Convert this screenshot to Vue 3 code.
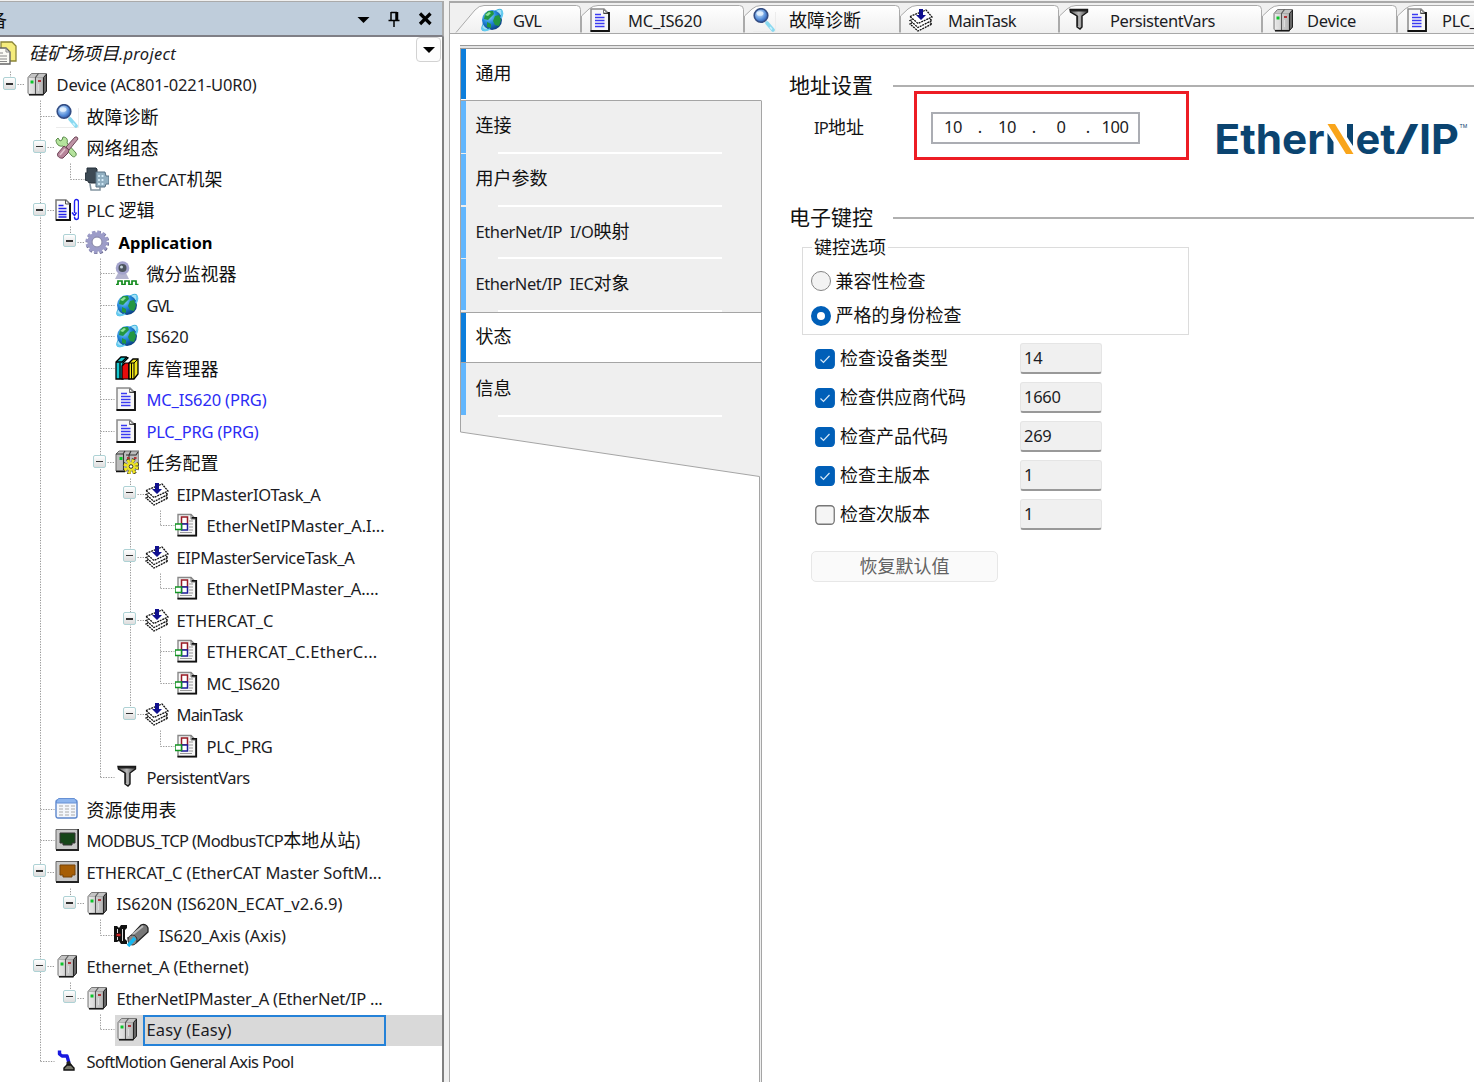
<script setup>
const rows = [
  { d: -1, icon: 'project', t: '硅矿场项目.project', w: 147, cls: 'proj' },
  { d: 0, icon: 'device', t: 'Device (AC801-0221-U0R0)', w: 200, open: true },
  { d: 1, icon: 'magnify', t: '故障诊断' },
  { d: 1, icon: 'network', t: '网络组态', open: true },
  { d: 2, icon: 'rack', t: 'EtherCAT机架', w: 106 },
  { d: 1, icon: 'plc', t: 'PLC 逻辑', w: 68, open: true },
  { d: 2, icon: 'gear', t: 'Application', w: 94, open: true, cls: 'bold' },
  { d: 3, icon: 'monitor', t: '微分监视器' },
  { d: 3, icon: 'globe', t: 'GVL', w: 26 },
  { d: 3, icon: 'globe', t: 'IS620', w: 42 },
  { d: 3, icon: 'books', t: '库管理器' },
  { d: 3, icon: 'doc', t: 'MC_IS620 (PRG)', w: 120, cls: 'blue' },
  { d: 3, icon: 'doc', t: 'PLC_PRG (PRG)', w: 112, cls: 'blue' },
  { d: 3, icon: 'taskcfg', t: '任务配置', open: true },
  { d: 4, icon: 'task', t: 'EIPMasterIOTask_A', w: 144, open: true },
  { d: 5, icon: 'call', t: 'EtherNetIPMaster_A.I...', w: 178 },
  { d: 4, icon: 'task', t: 'EIPMasterServiceTask_A', w: 178, open: true },
  { d: 5, icon: 'call', t: 'EtherNetIPMaster_A....', w: 172 },
  { d: 4, icon: 'task', t: 'ETHERCAT_C', w: 97, open: true },
  { d: 5, icon: 'call', t: 'ETHERCAT_C.EtherC...', w: 171 },
  { d: 5, icon: 'call', t: 'MC_IS620', w: 73 },
  { d: 4, icon: 'task', t: 'MainTask', w: 66, open: true },
  { d: 5, icon: 'call', t: 'PLC_PRG', w: 66 },
  { d: 3, icon: 'funnel', t: 'PersistentVars', w: 103 },
  { d: 1, icon: 'table', t: '资源使用表' },
  { d: 1, icon: 'modbus', t: 'MODBUS_TCP (ModbusTCP本地从站)', w: 273 },
  { d: 1, icon: 'ecat', t: 'ETHERCAT_C (EtherCAT Master SoftM...', w: 295, open: true },
  { d: 2, icon: 'device', t: 'IS620N (IS620N_ECAT_v2.6.9)', w: 226, open: true },
  { d: 3, icon: 'axis', t: 'IS620_Axis (Axis)', w: 127, cls: 'wide' },
  { d: 1, icon: 'device', t: 'Ethernet_A (Ethernet)', w: 162, open: true },
  { d: 2, icon: 'device', t: 'EtherNetIPMaster_A (EtherNet/IP ...', w: 266, open: true },
  { d: 3, icon: 'device', t: 'Easy (Easy)', w: 85, cls: 'sel' },
  { d: 1, icon: 'pool', t: 'SoftMotion General Axis Pool', w: 207 },
]

const PITCH = 31.5
const mid = (i) => Math.round(i * PITCH + 14.5) + 0.5

// dotted guides joining each node to its parent
const guides = []
rows.forEach((r, i) => {
  if (r.d < 0) return
  const x = 10.5 + 30 * r.d
  guides.push({ x1: r.open ? x + 7 : x, y1: mid(i), x2: x + 14, y2: mid(i) })
  let last = -1
  for (let j = i + 1; j < rows.length && rows[j].d > r.d; j++) {
    if (rows[j].d === r.d + 1) last = j
  }
  if (last > 0) guides.push({ x1: x + 30, y1: mid(i) + 16, x2: x + 30, y2: mid(last) })
})
guides.push({ x1: 10.5, y1: 33.5, x2: 10.5, y2: 40 })

const tabs = [
  { icon: 'globe', t: 'GVL', w: 131, lw: 28, ix: 30, lx: 63, first: true },
  { icon: 'doc', t: 'MC_IS620', w: 163, lw: 74, ix: 8, lx: 47 },
  { icon: 'magnify', t: '故障诊断', w: 156, ix: 8, lx: 45 },
  { icon: 'task', t: 'MainTask', w: 159, lw: 68, ix: 9, lx: 48 },
  { icon: 'funnel', t: 'PersistentVars', w: 203, lw: 105, ix: 8, lx: 51 },
  { icon: 'device', t: 'Device', w: 135, lw: 49, ix: 9, lx: 45 },
  { icon: 'doc', t: 'PLC_PRG', w: 160, lw: 66, ix: 9, lx: 45 },
]
const tabPath = (t) => {
  const end = `L${t.w - 4.5} .5 Q${t.w - 0.5} .5 ${t.w - 0.5} 4.5 L${t.w - 0.5} 27.5`
  return t.first ? `M6 27.5 L25 5 Q29 .5 34 .5 ${end}` : `M.5 27.5 L.5 11 L8 4 Q12 .5 17 .5 ${end}`
}

const nav = [
  { t: '通用', on: true },
  { t: '连接' },
  { t: '用户参数' },
  { t: 'EtherNet/IP  I/O映射', w: 154 },
  { t: 'EtherNet/IP  IEC对象', w: 154 },
  { t: '状态', on: true },
  { t: '信息' },
]

const checks = [
  { t: '检查设备类型', v: '14', on: true },
  { t: '检查供应商代码', v: '1660', on: true },
  { t: '检查产品代码', v: '269', on: true },
  { t: '检查主版本', v: '1', on: true },
  { t: '检查次版本', v: '1', on: false },
]

const parts = (s) => s.match(/[\u4e00-\u9fff]+|[^\u4e00-\u9fff]+/g).map((t) => ({ t, cjk: /[\u4e00-\u9fff]/.test(t) }))

// spreads the Latin letters so that a label takes the given width
const vFit = {
  mounted(el, { value }) {
    if (!value) return
    const latin = [...el.children].filter((c) => !c.classList.contains('cj'))
    const n = latin.reduce((a, c) => a + c.textContent.length, 0)
    const gap = (value - el.getBoundingClientRect().width) / n
    latin.forEach((c) => { c.style.letterSpacing = gap + 'px' })
  },
}
</script>

<template>
  <div class="app">
    <svg class="defs" width="0" height="0">
      <defs>
        <linearGradient id="gm" x1="0" x2="1"><stop offset="0" stop-color="#eee" /><stop offset="1" stop-color="#b4b4b4" /></linearGradient>
        <radialGradient id="gb" cx=".35" cy=".3" r=".8"><stop offset="0" stop-color="#8fd8ff" /><stop offset=".45" stop-color="#2287dc" /><stop offset="1" stop-color="#06306f" /></radialGradient>
        <radialGradient id="gl" cx=".4" cy=".35" r=".7"><stop offset="0" stop-color="#d8ecff" /><stop offset=".6" stop-color="#5b93dc" /><stop offset="1" stop-color="#2450a8" /></radialGradient>
        <linearGradient id="gf" x1="0" x2="1"><stop offset="0" stop-color="#555" /><stop offset=".5" stop-color="#bbb" /><stop offset="1" stop-color="#444" /></linearGradient>
        <linearGradient id="tabg" x1="0" y1="0" x2="0" y2="1"><stop offset="0" stop-color="#fff" /><stop offset="1" stop-color="#f0f0f0" /></linearGradient>
      </defs>
      <symbol id="project" viewBox="0 0 24 24">
        <path d="M8 1h11l4 4v15H8z" fill="#f5ec7c" stroke="#8a8436" stroke-width="1.3" />
        <path d="M1 7h12l4 4v12H1z" fill="#fbfbf5" stroke="#666" stroke-width="1.4" />
        <path d="M13 7v4h4M4 12h6M4 15h10M4 18h10M4 20.500h10" fill="none" stroke="#888" />
      </symbol>
      <symbol id="device" viewBox="0 0 24 24">
        <path d="M3 5.500L6.500 1.500H21.500V19L18.500 22.500H4L3 21z" fill="#c4c4c4" stroke="#777" />
        <path d="M3.500 5.500H18V22H3.500z" fill="url(#gm)" stroke="#999" stroke-width=".6" />
        <path d="M13.500 1.500L10.500 5.500V22.500" fill="none" stroke="#555" stroke-width="1.1" />
        <path d="M18.500 5.500L21.500 2V19L18.500 22.500z" fill="#666" stroke="#222" />
        <path d="M4 22.800H18.500" stroke="#111" stroke-width="1.500" />
        <path d="M6 12v7M13.500 12v7" stroke="#ddd" /><path d="M5.500 8.500h3v3h-3z" fill="#0cc52a" /><path d="M13 8h3v2h-3z" fill="#b0343a" />
      </symbol>
      <symbol id="magnify" viewBox="0 0 24 24">
        <path d="M1 23.500H23.500V4" fill="none" stroke="#ececec" />
        <path d="M15 15L21 22" stroke="#8ad9f0" stroke-width="3.600" stroke-linecap="round" /><path d="M18 19l2 2.400" stroke="#c8f3ff" stroke-width="1.500" />
        <circle cx="9" cy="7.500" r="6.800" fill="url(#gl)" stroke="#334d83" stroke-width="1.600" /><ellipse cx="8" cy="5.500" rx="3.500" ry="2.300" fill="#eaf5ff" opacity=".8" />
      </symbol>
      <symbol id="network" viewBox="0 0 24 24">
        <path d="M3 3l2 3 2-1 1-3c4 0 5 3 4 6l9 10c1 3-2 5-4 3L8 11C4 12 1 9 1 5z" fill="#b5e39d" stroke="#5a8a4a" />
        <path d="M22 2l1 2-9 11-3-3L20 2z" fill="#bd93a5" stroke="#70495a" />
        <path d="M9 11l5 4-1 3-5 5c-3 1-7-2-5-5z" fill="#b7859a" stroke="#6d4356" /><path d="M10 14l-5 6" stroke="#e3c6d1" stroke-width="1.500" />
      </symbol>
      <symbol id="rack" viewBox="0 0 24 24">
        <path d="M2 1h9l1 1v12l-1 2H4l-1-2-3-1V6h2z" fill="#3d4a55" stroke="#252f38" />
        <path d="M11 5h9l1 4h3v8h-3l-1 3h-9z" fill="#91afc1" stroke="#597285" /><path d="M14 8v10M17.500 8v10" stroke="#d6edf9" stroke-width="1.800" stroke-dasharray="2 2" />
        <path d="M5 17l1 6h9v-3" fill="none" stroke="#8495a1" stroke-width="1.600" />
      </symbol>
      <symbol id="plc" viewBox="0 0 24 24">
        <path d="M1 2h10l4 4v16H1z" fill="#fafafa" stroke="#777" stroke-width="1.500" /><path d="M15 5v17H1" fill="none" stroke="#111" stroke-width="2" /><path d="M10.500 2v4H15" fill="none" stroke="#555" />
        <path d="M3.500 7.500h5M3.500 10.500h8M3.500 13.500h8M3.500 16.500h8M3.500 19h8" stroke="#2222e8" stroke-width="1.300" />
        <path d="M19.500 15V4q0-2.500 2-2.500T23.500 4V19q0 2.500-2 2.500T19.500 19M17 14.500l2.500 3 2-3" fill="none" stroke="#2020f0" stroke-width="1.400" />
      </symbol>
      <symbol id="gear" viewBox="0 0 24 24">
        <circle cx="12.500" cy="12.500" r="10.300" fill="none" stroke="#6a6a90" stroke-width="3" stroke-dasharray="3 2.390" />
        <circle cx="12" cy="12" r="10.300" fill="none" stroke="#9c9cc8" stroke-width="2.600" stroke-dasharray="3 2.390" />
        <circle cx="12" cy="12" r="7.500" fill="none" stroke="#9c9cc8" stroke-width="4.500" /><circle cx="12" cy="12" r="5" fill="#fff" stroke="#77779c" />
      </symbol>
      <symbol id="monitor" viewBox="0 0 24 24">
        <path d="M3 12h8l3 6H0z" fill="#b3b3cf" /><circle cx="7.500" cy="7" r="6.800" fill="#a3a3cc" /><circle cx="7.500" cy="7" r="4" fill="#4b545c" /><circle cx="6.500" cy="6" r="1.500" fill="#c7d6dd" />
        <path d="M1 23.500h2v-3.500h4v3.500h3v-3.500h4v3.500h3v-3.500h4v3.500h2.500" fill="none" stroke="#118a1c" stroke-width="1.700" />
      </symbol>
      <symbol id="globe" viewBox="0 0 24 24">
        <ellipse cx="12" cy="12" rx="14" ry="5" transform="rotate(-47 12 12)" fill="#a5e2f8" stroke="#44b5df" />
        <circle cx="12" cy="12" r="10" fill="url(#gb)" />
        <path d="M8 3l5 0 1 3-3 3-3 3-4-1 1-5zM15 8l4-1 2 5-2 6-4-1-2-4zM7 14l4 2 0 4-4-1z" fill="#239642" /><path d="M5 7l4-3 2 1-3 3z" fill="#8fe39a" />
        <path d="M2 20q2 4 8 1M21 3q3 1 0 7" fill="none" stroke="#63cbf1" stroke-width="1.800" />
      </symbol>
      <symbol id="books" viewBox="0 0 24 24">
        <path d="M1 6l5-5h5l2 1-5 5v16H1z" fill="#17c7cf" stroke="#000" stroke-width="1.300" /><path d="M1 6h6l5-5M5 7v16" fill="none" stroke="#000" stroke-width="1.300" />
        <path d="M7 10l3-3h4v16H7z" fill="#e80c0c" stroke="#000" stroke-width="1.200" />
        <path d="M14 7l4-4h5v15l-4 5h-5z" fill="#f1e51a" stroke="#000" stroke-width="1.300" /><path d="M14 7h5l4-4M19 7v16M16.500 7v16" fill="none" stroke="#000" />
      </symbol>
      <symbol id="doc" viewBox="0 0 24 24">
        <path d="M2 1H15l5 5V23H2z" fill="#f7f7f7" stroke="#8b8b8b" stroke-width="1.500" />
        <path d="M14.500 5h5.500V23H1.500" fill="none" stroke="#111" stroke-width="1.800" /><path d="M14.500 1.500V5h4z" fill="#fff" stroke="#777" />
        <path d="M6 6.500h6M6 9.500h9.500M6 12.500h9.500M6 15.500h9.500M6 18.500h9.500" stroke="#3a3af2" stroke-width="1.600" />
      </symbol>
      <symbol id="taskcfg" viewBox="0 0 24 24">
        <path d="M1 4l3-3h20v14l-4 6H1z" fill="#bcbcbc" stroke="#666" /><path d="M1 4h7l2-3M8.500 4v16M16 1l-2 4v5M11 5h10l2-3" fill="none" stroke="#333" stroke-width="1.100" />
        <path d="M1 21.500h9" stroke="#111" stroke-width="1.500" />
        <path d="M4.500 7h3v3h-3z" fill="#0ac42b" /><path d="M12 7h2.500v2H12zM19 7h2.500v2H19z" fill="#b53535" />
        <circle cx="16" cy="16.500" r="6.200" fill="none" stroke="#222" stroke-width="4" stroke-dasharray="3 1.870" /><circle cx="16" cy="16.500" r="5.800" fill="none" stroke="#f0e420" stroke-width="3.400" stroke-dasharray="2.600 1.955" /><circle cx="16" cy="16.500" r="4.300" fill="#ece224" /><circle cx="16" cy="16.500" r="1.800" fill="#fff" stroke="#333" />
      </symbol>
      <symbol id="task" viewBox="0 0 24 24">
        <g fill="#fff" stroke="#111" stroke-width="1.300"><path d="M1 16L15 10.500 23 16 9 23z" stroke-dasharray="2 .8" /><path d="M1 12.500L15 7 23 12.500 9 19.500z" stroke-dasharray="2 .8" /><path d="M1 8.500L17 2 23 9 9 15.500z" stroke-dasharray="2 .8" /></g>
        <path d="M10 1h4v6h3l-5 5-5-5h3z" fill="#10108f" />
      </symbol>
      <symbol id="call" viewBox="0 0 24 24">
        <path d="M3 1.500H16l5 5V22.500H3z" fill="#f7f7f7" stroke="#888" stroke-width="1.400" /><path d="M16.500 5h4.700V22.700H2.500" fill="none" stroke="#111" stroke-width="1.800" /><path d="M16 1.500V6h4.500" fill="none" stroke="#777" />
        <path d="M14 8h4M14 11h4M14 14h4M14 17h4M5 19.500h12" stroke="#999" />
        <path d="M6.500 4h6v7h-6z" fill="#fff" stroke="#981b25" stroke-width="1.500" /><path d="M6.500 11h6v6h-6z" fill="#fff" stroke="#1b1b99" stroke-width="1.500" /><path d="M0 11h6.500v5.500H0z" fill="#fff" stroke="#119322" stroke-width="1.500" />
      </symbol>
      <symbol id="funnel" viewBox="0 0 24 24">
        <path d="M3 1.500h17.500v2.500l-5.500 4v11l-2 2-3-2V8L3.500 4z" fill="url(#gf)" stroke="#151515" stroke-width="1.400" /><path d="M3.500 2.500h16.500" stroke="#222" stroke-width="2" /><path d="M10.500 8v10" stroke="#222" stroke-width="1.300" />
      </symbol>
      <symbol id="table" viewBox="0 0 24 24">
        <rect x="1" y="3" width="21" height="18" rx="2" fill="#f4f7fc" stroke="#5c86cc" stroke-width="1.400" /><path d="M1.500 6V4l2-2.500h16l2 2.500v2z" fill="#8db5ee" stroke="#6690d4" />
        <path d="M4 9h4M4 12h4M4 15h4M4 18h4M10 9h4M10 12h4M10 15h4M10 18h4M16 9h4M16 12h4M16 15h4M16 18h4" stroke="#aaa" />
      </symbol>
      <symbol id="modbus" viewBox="0 0 24 24"><path d="M1 1.500h22v20H1z" fill="#c8c8c8" stroke="#666" /><path d="M23.300 1v21H1" fill="none" stroke="#222" stroke-width="1.800" /><path d="M5 5h15v10h-3v2h-3H8v-2H5z" fill="#164619" stroke="#333" /></symbol>
      <symbol id="ecat" viewBox="0 0 24 24"><path d="M1 1.500h22v20H1z" fill="#c8c8c8" stroke="#666" /><path d="M23.300 1v21H1" fill="none" stroke="#222" stroke-width="1.800" /><path d="M5 5h15v10h-3v2h-3H8v-2H5z" fill="#a65e06" stroke="#754208" /></symbol>
      <symbol id="axis" viewBox="0 0 36 24">
        <path d="M0 3h3l2 2 2-3h6v3l-2 2v9l2 2v3H7l-2-3-2 1H0z" fill="#111" /><path d="M3.500 6v4M3.500 14v3M8.500 6v12" stroke="#ddd" stroke-width="1" /><path d="M2.500 12h4" stroke="#c22" stroke-width="2.500" />
        <path d="M15 15L27 2q5-2 7 3v4L22 20q-6 3-8-5z" fill="#777" stroke="#222" stroke-width="1.300" /><path d="M18 12L29 3" stroke="#bbb" stroke-width="2" /><ellipse cx="18.500" cy="17" rx="4.500" ry="5" fill="#888" stroke="#333" /><path d="M14 23l7-8" stroke="#15b8f1" stroke-width="3.500" />
      </symbol>
      <symbol id="pool" viewBox="0 0 24 24">
        <path d="M4.500 1.500v3.500l2.500 2 5 0 2 7" fill="none" stroke="#1919df" stroke-width="3.400" stroke-linejoin="round" /><path d="M11.500 13l3-1 3 5-6 1z" fill="#222" />
        <path d="M9 19l3-3h4l3 3v2H9z" fill="#77776a" stroke="#111" stroke-width="1.400" />
      </symbol>
    </svg>

    <section class="left">
      <header class="bar">
        <span class="cut cj">备</span>
        <svg width="84" height="20" viewBox="0 0 84 20"><path d="M4.500 8h12l-6 6z" fill="#000" /><path d="M38 3v8M38 3.500h6M44.500 3v8M43 3v8M35.500 11.500h11M41 12v6" fill="none" stroke="#000" stroke-width="1.500" /><path d="M67 4.500l10.500 10.500M77.500 4.500L67 15" stroke="#000" stroke-width="3.200" /></svg>
      </header>
      <div class="tree">
        <svg class="guides" width="440" height="1044"><line v-for="(g, i) in guides" :key="i" v-bind="g" stroke="#989898" stroke-dasharray="1.300 1.300" /></svg>
        <button class="drop"><svg width="14" height="8"><path d="M1 1h12l-6 6z" /></svg></button>
        <div v-for="(r, i) in rows" :key="i" class="row" :class="[r.cls, { pure: !r.w }]" :style="{ paddingLeft: 3 + 30 * r.d + 'px' }">
          <span class="exp"><i v-if="r.open" /></span>
          <span class="ic"><svg class="icon"><use :href="'#' + r.icon" /></svg></span>
          <span class="label"><span v-fit="r.w" class="txt"><span v-for="(p, k) in parts(r.t)" :key="k" :class="{ cj: p.cjk }">{{ p.t }}</span></span></span>
        </div>
      </div>
    </section>

    <section class="right">
      <div class="tabs">
        <div v-for="t in tabs" :key="t.t" class="tab" :style="{ width: t.w + 'px' }">
          <svg class="shape" :width="t.w" height="28"><path :d="tabPath(t)" fill="url(#tabg)" stroke="#aaa" /></svg>
          <svg class="icon" :style="{ marginLeft: t.ix + 'px' }"><use :href="'#' + t.icon" /></svg>
          <span class="tl" :style="{ marginLeft: t.lx - t.ix - 24 + 'px' }"><span v-fit="t.lw" class="txt"><span v-for="(p, k) in parts(t.t)" :key="k" :class="{ cj: p.cjk }">{{ p.t }}</span></span></span>
        </div>
      </div>
      <div class="editor">
        <nav class="nav">
          <div v-for="n in nav" :key="n.t" class="item" :class="{ on: n.on }"><span v-fit="n.w" class="txt"><span v-for="(p, k) in parts(n.t)" :key="k" :class="{ cj: p.cjk }">{{ p.t }}</span></span></div>
          <svg class="foot" width="302" height="667"><path d="M.5 0V15L299.500 59.500V667H301.500V0z" fill="#efefef" /><path d="M.5 0V15L299.500 59.500V667M301.500 0V667" fill="none" stroke="#a5a5a5" /></svg>
        </nav>
        <main class="form">
          <h2><span class="cj">地址设置</span></h2>
          <div class="iprow">
            <span class="iplabel"><span v-fit="50" class="txt"><span>IP</span><span class="cj">地址</span></span></span>
            <div class="ip"><b>10</b><i>.</i><b>10</b><i>.</i><b>0</b><i>.</i><b>100</b></div>
            <svg class="logo" width="260" height="62">
              <g font-family="Inter, sans-serif" font-weight="700" fill="#0b4470" font-size="41">
                <text x="1.500" y="57" textLength="110" lengthAdjust="spacingAndGlyphs">Ether</text>
                <text x="142.500" y="57" textLength="40" lengthAdjust="spacingAndGlyphs">et</text>
                <text x="182" y="53" font-size="34.500" textLength="24" lengthAdjust="spacingAndGlyphs">/</text>
                <text x="206" y="57" textLength="40" lengthAdjust="spacingAndGlyphs">IP</text>
                <text x="246.500" y="30.500" font-size="5" font-weight="400">TM</text>
              </g>
              <path d="M114.500 36L120.500 45V57H114.500zM134 27H140V49L134 40z" fill="#0b4470" /><path d="M114.500 27H122L140.500 57H133z" fill="#f9a51b" />
            </svg>
            <div class="mark" />
          </div>
          <h2 class="second"><span class="cj">电子键控</span></h2>
          <div class="group">
            <span class="legend cj">键控选项</span>
            <label class="radio"><i /><span class="cj">兼容性检查</span></label>
            <label class="radio on"><i /><span class="cj">严格的身份检查</span></label>
          </div>
          <div class="checks">
            <div v-for="c in checks" :key="c.t" class="check">
              <svg width="20" height="20"><rect x=".75" y=".75" width="18.500" height="18.500" rx="3.500" :fill="c.on ? '#005fb8' : '#f5f5f5'" :stroke="c.on ? '#005fb8' : '#777'" stroke-width="1.300" /><path v-if="c.on" d="M5.500 10.500l3 3 6-6.500" fill="none" stroke="#d5e8f8" stroke-width="1.200" /></svg>
              <span class="cj">{{ c.t }}</span>
              <div class="field">{{ c.v }}</div>
            </div>
          </div>
          <button class="reset cj">恢复默认值</button>
        </main>
      </div>
    </section>
  </div>
</template>

<style>
body { margin: 0; overflow: hidden; }
</style>

<style scoped>
* { box-sizing: border-box; }
.app { display: flex; width: 1474px; height: 1082px; overflow: hidden; background: #f0f0f0; color: #1c1c24; font: 16.5px/30px "Noto Sans", "Noto Sans CJK SC", sans-serif; }
.defs { position: absolute; }
.cj { font-family: "Noto Sans CJK SC", sans-serif; font-size: 18px; line-height: 24px; color: #111; letter-spacing: 0; }
.txt { display: inline-block; white-space: pre; line-height: 30px; }
.icon { width: 24px; height: 24px; flex: none; overflow: visible; }
.left { width: 444px; flex: none; padding-top: 1px; display: flex; flex-direction: column; }
.bar { height: 36px; flex: none; background: #bfcddb; border: solid #aaa; border-width: 1px 2px 2px 0; border-bottom-color: #7f7f86; display: flex; justify-content: space-between; align-items: center; padding-right: 5px; }
.cut { margin-left: -11px; }
.tree { position: relative; flex: 1; padding-top: 1px; background: #fff; border-right: 2px solid #808080; overflow: hidden; }
.guides { position: absolute; left: 0; top: 1px; }
.drop { position: absolute; right: 1px; top: 0; width: 25px; height: 25px; padding: 0; border: 1.5px solid #d2d2d2; border-radius: 4px; background: #fdfdfd; display: flex; align-items: center; justify-content: center; z-index: 1; }
.row { position: relative; height: 31.5px; display: flex; align-items: center; }
.exp { width: 13px; flex: none; margin-right: 9px; padding-bottom: 4px; }
.exp i { display: block; width: 13px; height: 13px; border: 1px solid #aed2d5; border-radius: 2px; background: linear-gradient(transparent 5px, #333 5px, #333 6.500px, transparent 6.500px) 2px 0 / 7px 11px no-repeat, linear-gradient(#fff, #ddd); }
.ic { display: flex; width: 24px; margin-right: 7.500px; padding-bottom: 2px; flex: none; }
.label { height: 30px; display: flex; align-items: center; white-space: nowrap; }
.pure .label { padding-top: 2px; }
.proj { padding-left: 0 !important; font-style: italic; }
.proj .exp { width: 0; margin: 0; }
.proj .ic { margin: 0 12px 0 -7px; }
.bold { font-weight: 700; color: #000; }
.bold .label { padding-left: 2px; }
.blue { color: #2c2cf5; }
.wide .ic, .wide .icon { width: 36px; }
.wide .ic { margin-left: -1px; margin-right: 9px; }
.sel { background: linear-gradient(#d9d9d9, #d9d9d9) 115px 0 / 330px 31px no-repeat; }
.sel .label { width: 243px; height: 31px; border: 2px solid #2582d8; margin-left: -3.500px; padding-left: 1.500px; }
.right { flex: 1; margin: 1px 0 0 5px; border-left: 1.500px solid #aaa; border-top: 2px solid #a9a9a9; background: linear-gradient(#f0f0f0 31px, #fff 31px); display: flex; flex-direction: column; min-width: 0; }
.tabs { height: 31px; flex: none; display: flex; align-items: flex-end; border-bottom: 1.500px solid #a8a8a8; overflow: hidden; }
.tab { position: relative; height: 28px; flex: none; display: flex; align-items: center; }
.tab .icon { position: relative; top: 1px; }
.tl { position: relative; white-space: nowrap; padding-top: 3px; }
.shape { position: absolute; left: 0; top: 0; }
.editor { flex: 1; margin: 11px 0 0 10px; border-top: 1px solid #999; display: flex; }
.nav { width: 302px; flex: none; padding-top: 3px; background: linear-gradient(#e5e5e5 2px, #999 2px, #999 3px, transparent 3px); }
.item { height: 52.500px; border-left: 1px solid #a5a5a5; border-right: 1px solid #a5a5a5; background: linear-gradient(#fff, #fff) 37px 100% / 224px 2px no-repeat, linear-gradient(#62b6fd, #62b6fd) 0 0 / 5px 51px no-repeat, #efefef; padding: 0 0 2px 14.500px; display: flex; align-items: center; }
.item.on { height: 51.500px; background: linear-gradient(#0d7edb, #0d7edb) 0 0 / 5px 50px no-repeat, #fff; border-top: 1px solid #a5a5a5; border-bottom: 1px solid #a5a5a5; padding-bottom: 1px; }
.item.on:first-child { border-top: 0; border-right-color: #fff; }
.item.on + .item { height: 53.500px; background-size: 224px 2px, 5px 52px, auto; }
.foot { display: block; }
.form { flex: 1; padding-top: 23px; background: linear-gradient(#e5e5e5 2px, #999 2px, #999 3px, transparent 3px); display: flex; flex-direction: column; min-width: 0; }
h2 { margin: 0; padding: 2px 0 0 27px; height: 32px; display: flex; align-items: center; gap: 20px; font-weight: 400; flex: none; }
h2::after { content: ""; flex: 1; height: 1.500px; background: #b0b0b0; }
h2 .cj { font-size: 21px; margin-top: -5px; }
.iprow { position: relative; height: 53px; flex: none; display: flex; align-items: center; padding-left: 52px; }
.iplabel { width: 117px; }
.ip { width: 209px; height: 32px; border: 2px solid #abadb3; display: flex; align-items: center; padding: 0 0 2px 3px; }
.ip b { font-weight: 400; width: 34px; text-align: center; letter-spacing: -.5px; }
.ip i { font-style: normal; width: 20px; text-align: center; }
.logo { margin: 0 0 0 73px; flex: none; }
.mark { position: absolute; left: 152px; top: -10px; width: 275px; height: 69px; border: 3px solid #ed1c24; }
.second { margin-top: 47px; }
.group { position: relative; margin: 14px 0 0 40px; width: 387px; height: 88px; border: 1.500px solid #dcdcdc; padding: 16px 0 0 7.500px; flex: none; }
.legend { position: absolute; left: 9px; top: -14px; padding: 0 2px; background: #fff; }
.radio { height: 34.500px; display: flex; align-items: center; gap: 5px; }
.radio .cj { margin-top: -3px; }
.radio i { width: 20px; height: 20px; border-radius: 50%; border: 1.500px solid #858585; background: #f3f3f3; }
.radio.on i { border: 6px solid #005fb8; background: #fff; }
.checks { margin: 4px 0 0 53px; flex: none; }
.check { height: 39px; display: flex; align-items: center; }
.check > .cj { width: 180px; margin: -3px 0 0 5px; }
.field { width: 82px; height: 31px; border: 1.500px solid #e5e5e5; border-bottom: 2px solid #999; border-radius: 3px; background: #f0f0f0; padding-left: 3px; line-height: 27px; letter-spacing: -.3px; }
.reset { margin: 17px 0 0 49px; width: 187px; height: 31px; border: 1.500px solid #e7e7e7; border-radius: 5px; background: #fafafa; color: #626262; padding: 0 0 3px; flex: none; }
</style>
